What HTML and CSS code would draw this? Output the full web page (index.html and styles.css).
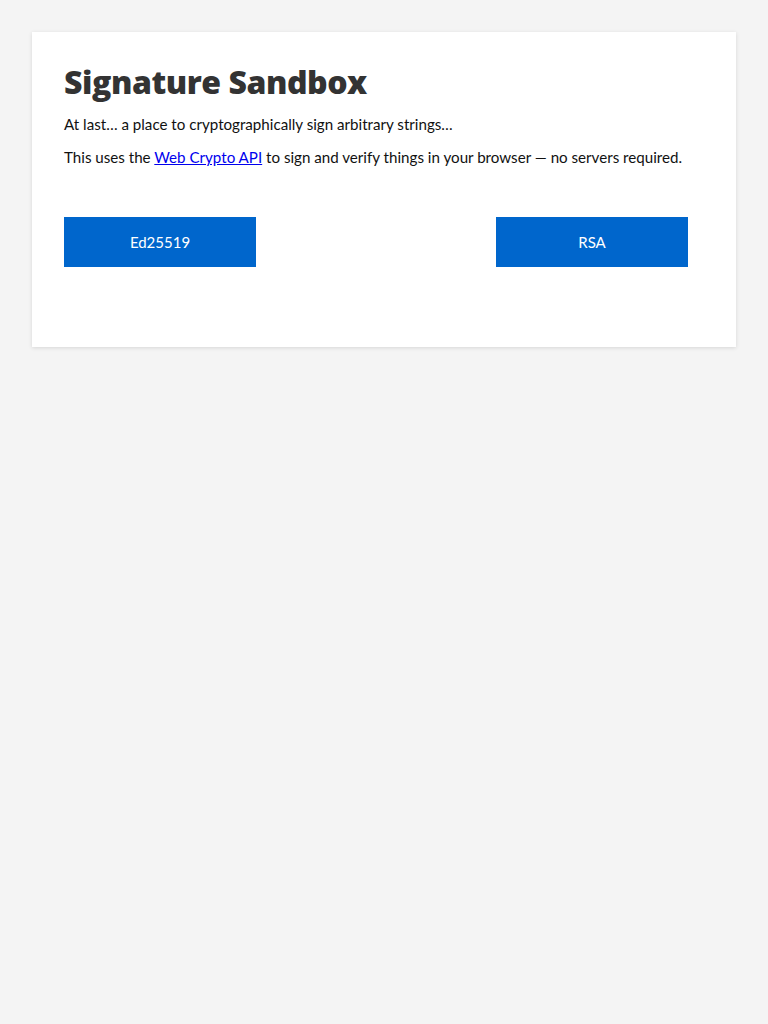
FILE: index.html
```html
<!DOCTYPE html>
<html>
<head>
<meta charset="utf-8">
<link rel="stylesheet" href="styles.css">
</head>
<body>
<main class="card">
  <h1 class="title">Signature Sandbox</h1>
  <p class="text">At last… a place to cryptographically sign arbitrary strings…</p>
  <p class="text">This uses the <a class="link" href="#">Web Crypto API</a> to sign and verify things in your browser — no servers required.</p>
  <div class="actions">
    <button class="btn">Ed25519</button>
    <button class="btn">RSA</button>
  </div>
</main>
</body>
</html>
```
FILE: styles.css
```css
html, body {
  margin: 0;
  padding: 0;
  background: #f4f4f4;
}
body {
  padding: 32px;
  font-family: Lato, "Open Sans", sans-serif;
  color: #111;
}
.card {
  background: #fff;
  box-shadow: 0 1px 4px rgba(0,0,0,0.12);
  padding: 32px 32px 80px;
}
.title {
  margin: 0 0 14px;
  font-family: "Open Sans", Lato, sans-serif;
  font-size: 32px;
  line-height: 36px;
  font-weight: 800;
  color: #333;
  letter-spacing: -0.45px;
}
.text {
  margin: 0 0 12px;
  font-size: 15.15px;
  line-height: 21px;
}
.link {
  color: #0000ee;
}
.actions {
  display: flex;
  justify-content: space-between;
  margin: 49px 16px 0 0;
}
.btn {
  width: 192px;
  height: 50px;
  border: 0;
  background: #0066cc;
  color: #fff;
  font-family: inherit;
  font-size: 15px;
}
```
